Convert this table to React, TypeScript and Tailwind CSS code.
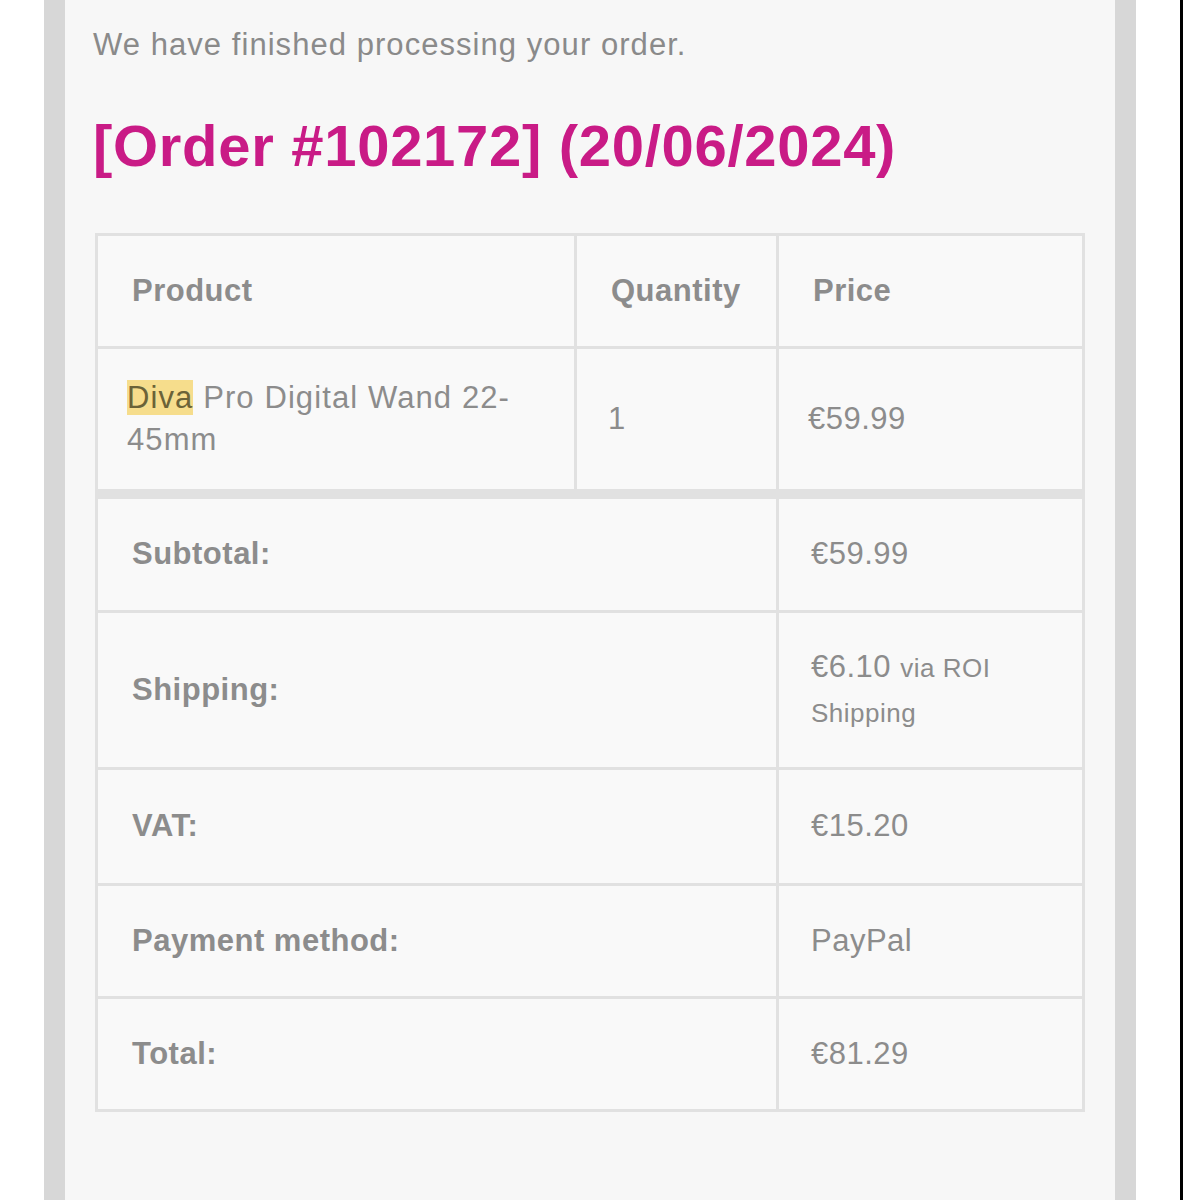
import React from "react";

const cell = "border-[3px] border-[#e1e1e1] align-middle";
const head = cell + " pl-[34px] pr-[20px] text-left font-bold";
const body = cell + " pl-[29px] pr-[20px]";

const totals: { label: string; value: React.ReactNode; h: string }[] = [
    { label: "Subtotal:", value: "€59.99", h: "h-[118px]" },
    {
        label: "Shipping:",
        value: (
            <span className="block leading-[43px]">
                €6.10 <span className="text-[26px]">via ROI</span>
                <br />
                <span className="text-[26px]">Shipping</span>
            </span>
        ),
        h: "h-[157px]",
    },
    { label: "VAT:", value: "€15.20", h: "h-[116px]" },
    { label: "Payment method:", value: "PayPal", h: "h-[113px]" },
    { label: "Total:", value: "€81.29", h: "h-[113px]" },
];

const App = () => {
    return (
        <div className="flex h-[1200px] w-[1183px] overflow-hidden bg-white font-['Liberation_Sans',Arial,sans-serif]">
            <div className="w-[44px] shrink-0 bg-white" />
            <div className="w-[21px] shrink-0 bg-[#d7d7d7]" />
            <div className="flex-1 bg-[#f7f7f7] pl-[28px] pt-[27px]">
                <p className="text-[31px] leading-[36px] tracking-[1.05px] text-[#8a8a8a]">
                    We have finished processing your order.
                </p>
                <h2 className="mt-[51px] text-[58px] font-bold leading-[64px] tracking-[0.7px] text-[#c91b86]">
                    [Order #102172] (20/06/2024)
                </h2>
                <table className="ml-[2px] mt-[55px] w-[990px] table-fixed border-collapse bg-[#f9f9f9] text-[31px] tracking-[0.5px] text-[#8c8c8c]">
                    <colgroup>
                        <col className="w-[479px]" />
                        <col className="w-[202px]" />
                        <col />
                    </colgroup>
                    <thead>
                        <tr className="h-[113px]">
                            <th className={head}>Product</th>
                            <th className={head}>Quantity</th>
                            <th className={head}>Price</th>
                        </tr>
                    </thead>
                    <tbody>
                        <tr className="h-[146px]">
                            <td className={body + " leading-[42px] tracking-[1.1px]"}>
                                <span className="bg-[#f6dd8c] text-[#6b6338]">Diva</span> Pro Digital Wand 22-
                                <br />
                                45mm
                            </td>
                            <td className={body + " pl-[31px]"}>1</td>
                            <td className={body}>€59.99</td>
                        </tr>
                    </tbody>
                    <tfoot>
                        {totals.map((row, i) => (
                            <tr key={row.label} className={row.h}>
                                <th colSpan={2} className={head + (i === 0 ? " border-t-[10px]" : "")}>
                                    {row.label}
                                </th>
                                <td className={body + " pl-[32px]" + (i === 0 ? " border-t-[10px]" : "")}>
                                    {row.value}
                                </td>
                            </tr>
                        ))}
                    </tfoot>
                </table>
            </div>
            <div className="w-[21px] shrink-0 bg-[#d7d7d7]" />
            <div className="w-[44px] shrink-0 bg-white" />
            <div className="w-[3px] shrink-0 bg-black" />
        </div>
    );
};

export default App;
